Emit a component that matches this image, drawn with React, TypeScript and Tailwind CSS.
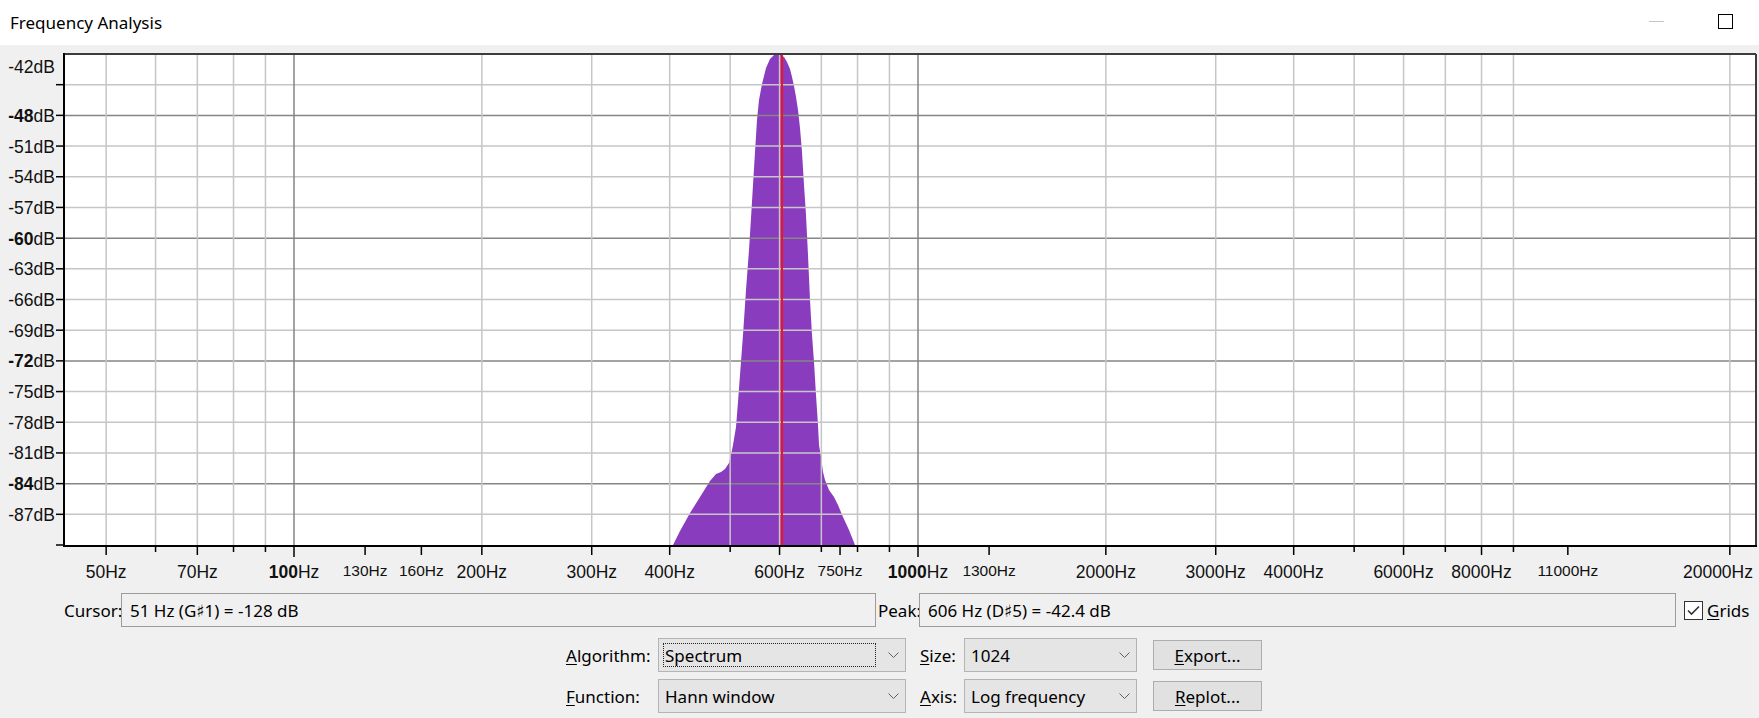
import React from 'react';

// plot box, in page pixels
const PLOT = { left: 64, right: 1756, top: 54, bottom: 545 };

// log frequency axis: 100 Hz at x=294, one decade = 624 px
const xOf = (f: number) => 294 + 624 * Math.log10(f / 100);
const yOf = (db: number) => PLOT.top + ((-42 - db) * (PLOT.bottom - PLOT.top)) / 48;

interface FreqTick {
  f: number;
  label?: string;
  small?: boolean;
  major?: boolean;
  grid?: boolean;
}

const freqTicks: FreqTick[] = [
  { f: 50, label: '50', grid: true },
  { f: 60, grid: true },
  { f: 70, label: '70', grid: true },
  { f: 80, grid: true },
  { f: 90, grid: true },
  { f: 100, label: '100', major: true, grid: true },
  { f: 130, label: '130', small: true },
  { f: 160, label: '160', small: true },
  { f: 200, label: '200', grid: true },
  { f: 300, label: '300', grid: true },
  { f: 400, label: '400', grid: true },
  { f: 500, grid: true },
  { f: 600, label: '600', grid: true },
  { f: 700, grid: true },
  { f: 750, label: '750', small: true },
  { f: 800, grid: true },
  { f: 900, grid: true },
  { f: 1000, label: '1000', major: true, grid: true },
  { f: 1300, label: '1300', small: true },
  { f: 2000, label: '2000', grid: true },
  { f: 3000, label: '3000', grid: true },
  { f: 4000, label: '4000', grid: true },
  { f: 5000, grid: true },
  { f: 6000, label: '6000', grid: true },
  { f: 7000, grid: true },
  { f: 8000, label: '8000', grid: true },
  { f: 9000, grid: true },
  { f: 11000, label: '11000', small: true },
  { f: 20000, label: '20000', grid: true },
];

const dbSteps = Array.from({ length: 16 }, (_, i) => -45 - i * 3); // -45 .. -90
const isMajorDb = (db: number) => db === -48 || db === -60 || db === -72 || db === -84;

// outline of the spectrum around the 606 Hz peak
const peakOutline: [number, number][] = [
  [673, 545], [680, 531], [690, 513], [700, 497], [710, 481], [716, 474], [721, 472],
  [725, 469], [729, 463], [731, 455], [733, 445], [736, 427], [738, 402], [740, 375],
  [743, 335], [746, 290], [749, 250], [751, 218], [753, 185], [755, 152], [757, 120],
  [759, 100], [762, 84], [766, 68], [770, 59], [774, 55], [777, 53], [780, 54],
  [784, 57], [787, 62], [790, 69], [792, 77], [794, 86], [796, 97], [798, 110],
  [800, 128], [802, 152], [804, 185], [806, 215], [808, 255], [810, 300], [812, 335],
  [814, 362], [816, 395], [818, 425], [819, 445], [821, 457], [823, 472], [825, 480],
  [829, 490], [834, 497], [838, 505], [843, 517], [849, 530], [855, 545],
];

function SpectrumPlot() {
  const peakX = Math.round(xOf(606));

  return (
    <svg
      width={1759}
      height={540}
      viewBox="0 45 1759 540"
      className="block font-['Liberation_Sans',Arial,sans-serif]"
    >
      <rect
        x={PLOT.left}
        y={PLOT.top}
        width={PLOT.right - PLOT.left}
        height={PLOT.bottom - PLOT.top}
        fill="#ffffff"
      />

      {/* spectrum fill */}
      <polygon points={peakOutline.map(p => p.join(',')).join(' ')} fill="#8a3cbe" />

      {/* horizontal grid */}
      {dbSteps.slice(0, 15).map(db => (
        <line
          key={db}
          x1={PLOT.left}
          x2={PLOT.right}
          y1={yOf(db)}
          y2={yOf(db)}
          stroke={isMajorDb(db) ? '#858585' : '#c6c6c6'}
          strokeWidth={1.5}
        />
      ))}

      {/* vertical grid */}
      {freqTicks.filter(t => t.grid).map(t => (
        <line
          key={t.f}
          x1={xOf(t.f)}
          x2={xOf(t.f)}
          y1={PLOT.top}
          y2={PLOT.bottom}
          stroke={t.major ? '#858585' : '#c6c6c6'}
          strokeWidth={1.5}
        />
      ))}

      {/* peak marker */}
      <line x1={peakX} x2={peakX} y1={PLOT.top} y2={PLOT.bottom} stroke="#f0141e" strokeWidth={2} />

      {/* frame */}
      <line x1={PLOT.left} x2={PLOT.right} y1={PLOT.top} y2={PLOT.top} stroke="#3c3c3c" strokeWidth={2} />
      <line x1={PLOT.right} x2={PLOT.right} y1={PLOT.top} y2={PLOT.bottom} stroke="#3c3c3c" strokeWidth={2} />
      <line x1={PLOT.left} x2={PLOT.left} y1={PLOT.top - 1} y2={PLOT.bottom + 2} stroke="#000" strokeWidth={2} />
      <line x1={PLOT.left - 1} x2={PLOT.right + 1} y1={PLOT.bottom + 1} y2={PLOT.bottom + 1} stroke="#000" strokeWidth={2} />

      {/* dB ruler */}
      {dbSteps.map(db => (
        <line key={db} x1={56} x2={PLOT.left} y1={yOf(db)} y2={yOf(db)} stroke="#000" strokeWidth={1.5} />
      ))}
      <text x={55} y={67} textAnchor="end" dominantBaseline="central" fontSize={17.5} fill="#111">
        -42dB
      </text>
      {dbSteps.slice(1, 15).map(db => (
        <text
          key={db}
          x={55}
          y={yOf(db) + 0.5}
          textAnchor="end"
          dominantBaseline="central"
          fontSize={17.5}
          fill="#111"
        >
          <tspan fontWeight={isMajorDb(db) ? 700 : 400}>{db}</tspan>dB
        </text>
      ))}

      {/* frequency ruler */}
      {freqTicks.map(t => {
        const x = xOf(t.f);
        const len = t.major ? 11 : t.label ? 9 : 6;
        // the last label is pulled back inside the ruler
        const last = t.f === 20000;
        return (
          <g key={t.f}>
            <line x1={x} x2={x} y1={PLOT.bottom + 1} y2={PLOT.bottom + 1 + len} stroke="#000" strokeWidth={1.5} />
            {t.label && (
              <text
                x={last ? 1753 : x}
                y={t.small ? 575.5 : 577.5}
                textAnchor={last ? 'end' : 'middle'}
                fontSize={t.small ? 15.5 : 17.5}
                fill="#111"
              >
                <tspan fontWeight={t.major ? 700 : 400}>{t.label}</tspan>Hz
              </text>
            )}
          </g>
        );
      })}
    </svg>
  );
}

function Chevron() {
  return (
    <svg width={11} height={6} viewBox="0 0 11 6" className="block">
      <polyline points="0.5,0.5 5.5,5.5 10.5,0.5" fill="none" stroke="#5f5f5f" strokeWidth={1} />
    </svg>
  );
}

function Combo({ value, width, focused = false }: { value: string; width: string; focused?: boolean }) {
  return (
    <div className={`flex h-full ${width} border border-[#b4b4b4] bg-[#e5e5e5]`}>
      {focused ? (
        <div className="my-[4px] ml-[4px] mr-[5px] flex flex-1 items-center border border-dotted border-[#222] pl-[1px]">
          {value}
        </div>
      ) : (
        <div className="flex flex-1 items-center pl-[6px]">{value}</div>
      )}
      <div className="flex w-[24px] items-center justify-center">
        <Chevron />
      </div>
    </div>
  );
}

function ReadOnlyField({ value, width }: { value: string; width: string }) {
  return (
    <div className={`flex h-full ${width} items-center border border-[#9c9c9c] bg-[#f0f0f0] pl-[8px]`}>
      {value}
    </div>
  );
}

function PushButton({ accel, rest }: { accel: string; rest: string }) {
  return (
    <button className="ml-[16px] flex h-[30px] w-[109px] items-center justify-center border border-[#adadad] bg-[#e1e1e1] text-black">
      <span className="underline underline-offset-2">{accel}</span>
      {rest}
    </button>
  );
}

export default function App() {
  return (
    <div className="h-[718px] w-[1759px] overflow-hidden bg-[#f0f0f0] font-['Noto_Sans','DejaVu_Sans',sans-serif] text-[17px] leading-none text-black">
      {/* title bar */}
      <div className="flex h-[45px] items-center justify-between bg-white pl-[10px]">
        <span className="pb-[1px]">Frequency Analysis</span>
        <div className="flex items-center pr-[26px] pb-[2px]">
          <div className="h-px w-[15px] bg-[#c4c4c4]" />
          <div className="ml-[54px] size-[15px] border border-black" />
        </div>
      </div>

      <div className="h-[540px]">
        <SpectrumPlot />
      </div>

      {/* cursor / peak readouts */}
      <div className="mt-[8px] flex h-[34px] items-center pl-[64px]">
        <span className="w-[57px]">Cursor:</span>
        <ReadOnlyField value="51 Hz (G♯1) = -128 dB" width="w-[755px]" />
        <span className="w-[43px] pl-[2px]">Peak:</span>
        <ReadOnlyField value="606 Hz (D♯5) = -42.4 dB" width="w-[757px]" />
        <div className="ml-[8px] flex items-center">
          <div className="flex size-[19px] items-center justify-center border border-[#333] bg-white">
            <svg width={13} height={11} viewBox="0 0 13 11">
              <polyline points="1,5.5 4.5,9 12,1.5" fill="none" stroke="#333" strokeWidth={1.6} />
            </svg>
          </div>
          <span className="ml-[4px]">
            <span className="underline underline-offset-2">G</span>rids
          </span>
        </div>
      </div>

      {/* analysis settings */}
      <div className="mt-[11px] flex h-[34px] items-center pl-[566px]">
        <span className="w-[92px]">
          <span className="underline underline-offset-2">A</span>lgorithm:
        </span>
        <Combo value="Spectrum" width="w-[248px]" focused />
        <span className="ml-[14px] w-[44px]">
          <span className="underline underline-offset-2">S</span>ize:
        </span>
        <Combo value="1024" width="w-[173px]" />
        <PushButton accel="E" rest="xport..." />
      </div>

      <div className="mt-[7px] flex h-[34px] items-center pl-[566px]">
        <span className="w-[92px]">
          <span className="underline underline-offset-2">F</span>unction:
        </span>
        <Combo value="Hann window" width="w-[248px]" />
        <span className="ml-[14px] w-[44px]">
          <span className="underline underline-offset-2">A</span>xis:
        </span>
        <Combo value="Log frequency" width="w-[173px]" />
        <PushButton accel="R" rest="eplot..." />
      </div>
    </div>
  );
}
